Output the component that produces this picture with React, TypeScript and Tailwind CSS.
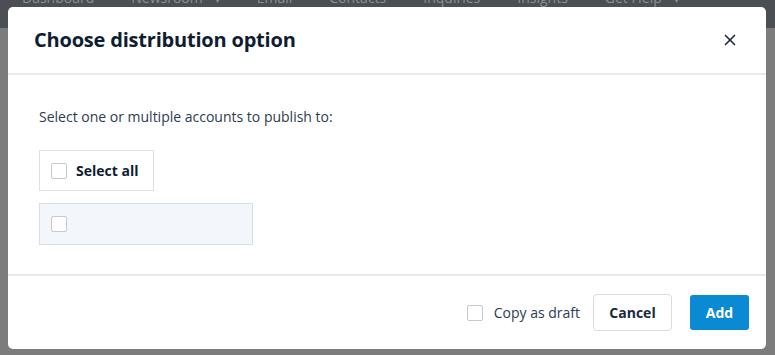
import { X } from "lucide-react";

const navItems = [
  { label: "Dashboard", menu: false },
  { label: "Newsroom", menu: true },
  { label: "Email", menu: false },
  { label: "Contacts", menu: false },
  { label: "Inquiries", menu: false },
  { label: "Insights", menu: false },
  { label: "Get Help", menu: true },
];

function Checkbox() {
  return <span className="block h-4 w-4 shrink-0 rounded-[2px] border border-[#c2c9d1] bg-white" />;
}

export default function App() {
  return (
    <div className="relative h-[355px] w-[775px] overflow-hidden bg-[#7c7c7c] font-['Open_Sans',sans-serif]">
      <div className="flex h-[28px] items-start gap-[37px] bg-[#4b4e53] pl-[22px]">
        {navItems.map((item) => (
          <span key={item.label} className="-mt-[12px] text-[14px] leading-[20px] text-[#8d9096]">
            {item.label}
            {item.menu && <span className="ml-[12px] text-[10px]">▾</span>}
          </span>
        ))}
      </div>

      <div className="absolute left-[8px] top-[7px] flex h-[342px] w-[758px] flex-col rounded-[5px] bg-white">
        <div className="flex h-[68px] items-center justify-between border-b-2 border-[#e6e9ed] pl-[26px] pr-[27px]">
          <h2 className="text-[20px] font-bold tracking-[-0.2px] text-[#0f1d33]">Choose distribution option</h2>
          <X size={18} strokeWidth={2.2} className="text-[#1d2b40]" />
        </div>

        <div className="flex flex-1 flex-col border-b-2 border-[#e6e9ed] pl-[31px] pt-[32px]">
          <p className="text-[14px] leading-[20px] text-[#2c3b4f]">Select one or multiple accounts to publish to:</p>
          <label className="mt-[23px] flex h-[41px] w-[115px] items-center gap-[9px] border border-[#dde1e6] pl-[11px]">
            <Checkbox />
            <span className="text-[14px] font-bold text-[#0f1d33]">Select all</span>
          </label>
          <div className="mt-[12px] flex h-[42px] w-[214px] items-center border border-[#d9dee4] bg-[#f3f6fb] pl-[11px]">
            <Checkbox />
          </div>
        </div>

        <div className="flex h-[73px] items-center justify-end gap-[18px] pr-[17px]">
          <label className="flex items-center gap-[11px]">
            <Checkbox />
            <span className="text-[14px] text-[#2c3b4f]">Copy as draft</span>
          </label>
          <div className="flex items-center gap-[18px]">
            <button className="-ml-[5px] h-[37px] w-[79px] rounded-[4px] border border-[#d7dce2] bg-white text-[14px] font-bold text-[#1a2a40]">
              Cancel
            </button>
            <button className="h-[35px] w-[59px] rounded-[3px] bg-[#0a8ad3] text-[14px] font-bold text-white">Add</button>
          </div>
        </div>
      </div>
    </div>
  );
}
